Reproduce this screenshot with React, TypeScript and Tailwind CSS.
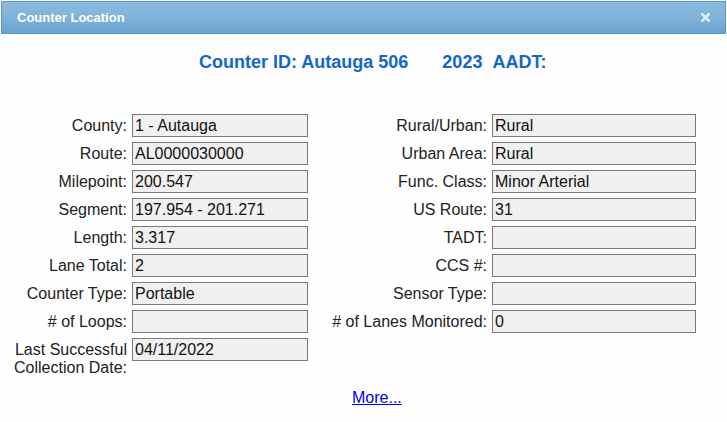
import React from 'react'

const left = [
  ['County:', '1 - Autauga'],
  ['Route:', 'AL0000030000'],
  ['Milepoint:', '200.547'],
  ['Segment:', '197.954 - 201.271'],
  ['Length:', '3.317'],
  ['Lane Total:', '2'],
  ['Counter Type:', 'Portable'],
  ['# of Loops:', ''],
  ['Last Successful Collection Date:', '04/11/2022'],
]

const right = [
  ['Rural/Urban:', 'Rural'],
  ['Urban Area:', 'Rural'],
  ['Func. Class:', 'Minor Arterial'],
  ['US Route:', '31'],
  ['TADT:', ''],
  ['CCS #:', ''],
  ['Sensor Type:', ''],
  ['# of Lanes Monitored:', '0'],
  null,
]

function Box({ value, wide }: { value: string; wide?: boolean }) {
  return (
    <div
      className={`h-[23px] ${wide ? 'w-[204px]' : 'w-[176px]'} border border-[#7a7a7a] bg-[#f0f0f0] pl-[2px] leading-[21px] text-[#111]`}
    >
      {value}
    </div>
  )
}

export default function App() {
  return (
    <div className="w-[727px] h-[422px] bg-[#fefefe] font-['Liberation_Sans',Arial,sans-serif] overflow-hidden">
      {/* title bar */}
      <div className="mt-[1px] mx-[1px] h-[33px] border border-[#5a98cc] bg-gradient-to-b from-[#8dbbdf] via-[#80b2da] to-[#6aa3d0] flex items-center justify-between pl-[15px] pr-[14px]">
        <span className="text-white font-bold text-[13px]">Counter Location</span>
        <svg width="9" height="9" viewBox="0 0 9 9" className="mr-[1px]">
          <path d="M1 1 L8 8 M8 1 L1 8" stroke="#e3ebf3" strokeWidth="2.6" strokeLinecap="square" />
        </svg>
      </div>

      {/* heading */}
      <div className="mt-[17px] pl-[199px] flex text-[18px] font-bold text-[#1466c6] leading-[22px]">
        <span>Counter ID: Autauga 506</span>
        <span className="ml-[34px]">2023&nbsp;&nbsp;AADT:</span>
      </div>

      {/* fields */}
      <div className="mt-[41px] grid grid-cols-[127px_176px_174px_204px] gap-x-[5px] gap-y-[5px] text-[16px] text-[#222]">
        {left.map((l, i) => {
          const r = right[i]
          return (
            <React.Fragment key={i}>
              <div className="text-right leading-[18px] pt-[3px]">{l[0]}</div>
              <div>
                <Box value={l[1]} />
              </div>
              <div className="text-right leading-[18px] pt-[3px]">{r ? r[0] : ''}</div>
              <div>{r && <Box value={r[1]} wide />}</div>
            </React.Fragment>
          )
        })}
      </div>

      {/* more link */}
      <div className="mt-[9px] pl-[352px] text-[16px]">
        <a href="#" className="text-[#0000ee] underline">More...</a>
      </div>
    </div>
  )
}
